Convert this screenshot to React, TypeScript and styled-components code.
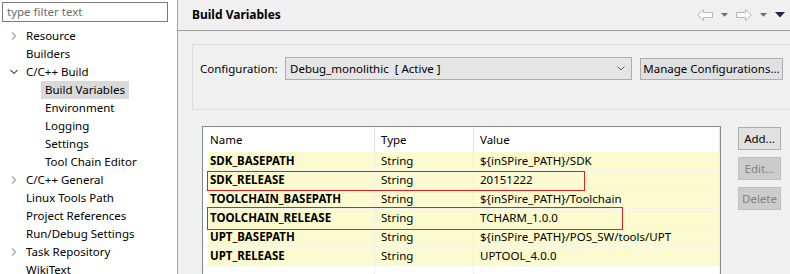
import React from 'react';
import styled, { createGlobalStyle } from 'styled-components';

const Global = createGlobalStyle`
  html, body { margin: 0; padding: 0; }
  body {
    font-family: "Noto Sans", "Liberation Sans", sans-serif;
    font-size: 11.5px;
    color: #000;
    background: #f0f0f0;
  }
  * { box-sizing: border-box; }
`;

const Window = styled.div`
  display: flex;
  width: 790px;
  height: 274px;
  overflow: hidden;
`;

const LeftPane = styled.div`
  width: 178px;
  flex: none;
  background: #fff;
  border-right: 1px solid #a0a0a0;
  display: flex;
  flex-direction: column;
`;

const Filter = styled.input`
  margin: 2px 0 0 2px;
  width: 166px;
  height: 20px;
  flex: none;
  border: 1px solid #7a7a7a;
  padding: 0 0 1px 4px;
  font: inherit;
  outline: none;
  &::placeholder { color: #6d6d6d; }
`;

const Tree = styled.div`
  padding-top: 5px;
  display: flex;
  flex-direction: column;
`;

const TreeRow = styled.div<{ $level: number }>`
  height: 18px;
  flex: none;
  display: flex;
  align-items: center;
  padding-left: ${(p) => (p.$level === 1 ? 10 : 41)}px;
  white-space: nowrap;
`;

const Toggle = styled.span`
  width: 12px;
  height: 18px;
  display: flex;
  align-items: center;
  flex: none;
`;

const TreeLabel = styled.span<{ $selected?: boolean }>`
  height: 18px;
  line-height: 18px;
  padding: 0 4px;
  background: ${(p) => (p.$selected ? '#d9d9d9' : 'transparent')};
`;

const RightPane = styled.div`
  flex: 1;
  display: flex;
  flex-direction: column;
  overflow: hidden;
`;

const Header = styled.div`
  height: 31px;
  flex: none;
  border-bottom: 1px solid #a0a0a0;
  display: flex;
  align-items: center;
  justify-content: space-between;
  padding: 0 5px 1px 14px;
`;

const Title = styled.div`
  font-weight: bold;
  font-size: 12px;
`;

const Nav = styled.div`
  display: flex;
  align-items: center;
  gap: 8px;
`;

const Body = styled.div`
  padding: 13px 0 0 14px;
  display: flex;
  flex-direction: column;
`;

const Group = styled.div`
  width: 640px;
  height: 66px;
  flex: none;
  border: 1px solid #dcdcdc;
  display: flex;
  align-items: flex-start;
  padding: 12px 0 0 7px;
`;

const FieldLabel = styled.div`
  width: 85px;
  line-height: 23px;
  flex: none;
`;

const Combo = styled.div`
  width: 347px;
  height: 23px;
  flex: none;
  background: #e5e5e5;
  border: 1px solid #adadad;
  display: flex;
  align-items: center;
  justify-content: space-between;
  padding: 0 6px 1px 4px;
  white-space: pre;
`;

const Button = styled.div<{ $disabled?: boolean; $width?: number }>`
  height: 23px;
  width: ${(p) => (p.$width ? `${p.$width}px` : 'auto')};
  flex: none;
  display: flex;
  align-items: center;
  justify-content: center;
  padding-bottom: 1px;
  background: ${(p) => (p.$disabled ? '#cccccc' : '#e1e1e1')};
  border: 1px solid ${(p) => (p.$disabled ? '#bfbfbf' : '#adadad')};
  color: ${(p) => (p.$disabled ? '#838383' : '#000')};
  white-space: nowrap;
`;

const ManageButton = styled(Button)`
  height: 22px;
  margin: 1px 0 0 8px;
`;

const TableArea = styled.div`
  display: flex;
  align-items: flex-start;
  margin: 16px 0 0 10px;
`;

const Table = styled.div`
  position: relative;
  width: 519px;
  height: 200px;
  flex: none;
  border: 1px solid #828790;
  background: #fff;
  display: flex;
  flex-direction: column;
`;

const Row = styled.div<{ $kind: 'head' | 'data' | 'fill' }>`
  display: grid;
  grid-template-columns: 172px 99px 1fr;
  height: ${(p) => (p.$kind === 'head' ? '25px' : p.$kind === 'data' ? '19px' : 'auto')};
  flex: ${(p) => (p.$kind === 'fill' ? 1 : 'none')};
`;

const Cell = styled.div<{ $kind: 'head' | 'data' | 'fill'; $first?: boolean }>`
  display: flex;
  align-items: center;
  white-space: nowrap;
  overflow: hidden;
  border-right: 1px solid ${(p) => (p.$kind === 'head' ? '#e5e5e5' : '#f0f0f0')};
  padding-left: 6px;
  padding-bottom: 1px;
  font-weight: ${(p) => (p.$kind === 'data' && p.$first ? 'bold' : 'normal')};
  background: ${(p) =>
    p.$kind === 'data'
      ? p.$first
        ? 'linear-gradient(to right, #fff 5px, #fbfbcf 5px)'
        : '#fbfbcf'
      : 'transparent'};
  border-bottom: ${(p) => (p.$kind === 'data' ? '1px solid #f2f2f2' : 'none')};
  ${(p) => (p.$first ? 'padding-left: 7px;' : '')}
`;

const Highlight = styled.div<{ $top: number; $width: number; $height: number }>`
  position: absolute;
  left: 4px;
  top: ${(p) => p.$top}px;
  width: ${(p) => p.$width}px;
  height: ${(p) => p.$height}px;
  border: 1px solid #e0202a;
  pointer-events: none;
`;

const SideButtons = styled.div`
  display: flex;
  flex-direction: column;
  gap: 7px;
  margin: 1px 0 0 17px;
`;

const Chevron = ({ open }: { open?: boolean }) =>
  open ? (
    <svg width="8" height="8" viewBox="0 0 8 8">
      <polyline points="0.5,2 4,5.5 7.5,2" fill="none" stroke="#5a5a5a" strokeWidth="1.2" />
    </svg>
  ) : (
    <svg width="8" height="8" viewBox="0 0 8 8">
      <polyline points="2,0.5 5.5,4 2,7.5" fill="none" stroke="#a6a6a6" strokeWidth="1.2" />
    </svg>
  );

const ArrowIcon = ({ dir }: { dir: 'left' | 'right' }) => (
  <svg width="16" height="12" viewBox="0 0 16 12" style={{ transform: dir === 'right' ? 'scaleX(-1)' : undefined }}>
    <polygon
      points="0.5,6 6.5,0.5 6.5,3.5 15.5,3.5 15.5,8.5 6.5,8.5 6.5,11.5"
      fill="#fafafa"
      stroke="#b8b8b8"
      strokeWidth="1"
    />
  </svg>
);

const Tri = ({ dark }: { dark?: boolean }) =>
  dark ? (
    <svg width="10" height="6" viewBox="0 0 10 6">
      <polygon points="0,0 10,0 5,5.5" fill="#2e2148" />
    </svg>
  ) : (
    <svg width="7" height="4" viewBox="0 0 7 4">
      <polygon points="0,0 7,0 3.5,3.8" fill="#6e6e6e" />
    </svg>
  );

type TreeItem = { label: string; level: number; toggle?: 'open' | 'closed'; selected?: boolean };

const treeItems: TreeItem[] = [
  { label: 'Resource', level: 1, toggle: 'closed' },
  { label: 'Builders', level: 1 },
  { label: 'C/C++ Build', level: 1, toggle: 'open' },
  { label: 'Build Variables', level: 2, selected: true },
  { label: 'Environment', level: 2 },
  { label: 'Logging', level: 2 },
  { label: 'Settings', level: 2 },
  { label: 'Tool Chain Editor', level: 2 },
  { label: 'C/C++ General', level: 1, toggle: 'closed' },
  { label: 'Linux Tools Path', level: 1 },
  { label: 'Project References', level: 1 },
  { label: 'Run/Debug Settings', level: 1 },
  { label: 'Task Repository', level: 1, toggle: 'closed' },
  { label: 'WikiText', level: 1 },
];

const variables = [
  ['SDK_BASEPATH', 'String', '${inSPire_PATH}/SDK'],
  ['SDK_RELEASE', 'String', '20151222'],
  ['TOOLCHAIN_BASEPATH', 'String', '${inSPire_PATH}/Toolchain'],
  ['TOOLCHAIN_RELEASE', 'String', 'TCHARM_1.0.0'],
  ['UPT_BASEPATH', 'String', '${inSPire_PATH}/POS_SW/tools/UPT'],
  ['UPT_RELEASE', 'String', 'UPTOOL_4.0.0'],
];

export default function App() {
  return (
    <>
      <Global />
      <Window>
        <LeftPane>
          <Filter placeholder="type filter text" />
          <Tree>
            {treeItems.map((t) => (
              <TreeRow key={t.label} $level={t.level}>
                {t.level === 1 && (
                  <Toggle>{t.toggle ? <Chevron open={t.toggle === 'open'} /> : null}</Toggle>
                )}
                <TreeLabel $selected={t.selected}>{t.label}</TreeLabel>
              </TreeRow>
            ))}
          </Tree>
        </LeftPane>
        <RightPane>
          <Header>
            <Title>Build Variables</Title>
            <Nav>
              <ArrowIcon dir="left" />
              <Tri />
              <ArrowIcon dir="right" />
              <Tri />
              <Tri dark />
            </Nav>
          </Header>
          <Body>
            <Group>
              <FieldLabel>Configuration:</FieldLabel>
              <Combo>
                <span>Debug_monolithic  [ Active ]</span>
                <svg width="8" height="5" viewBox="0 0 8 5">
                  <polyline points="0.5,0.5 4,4 7.5,0.5" fill="none" stroke="#606060" strokeWidth="1" />
                </svg>
              </Combo>
              <ManageButton $width={143}>Manage Configurations...</ManageButton>
            </Group>
            <TableArea>
              <Table>
                <Row $kind="head">
                  <Cell $kind="head" $first>Name</Cell>
                  <Cell $kind="head">Type</Cell>
                  <Cell $kind="head">Value</Cell>
                </Row>
                {variables.map((v) => (
                  <Row $kind="data" key={v[0]}>
                    <Cell $kind="data" $first>{v[0]}</Cell>
                    <Cell $kind="data">{v[1]}</Cell>
                    <Cell $kind="data">{v[2]}</Cell>
                  </Row>
                ))}
                <Row $kind="fill">
                  <Cell $kind="fill" $first />
                  <Cell $kind="fill" />
                  <Cell $kind="fill" />
                </Row>
                <Highlight $top={44} $width={378} $height={20} />
                <Highlight $top={80} $width={416} $height={23} />
              </Table>
              <SideButtons>
                <Button $width={43}>Add...</Button>
                <Button $width={43} $disabled>Edit...</Button>
                <Button $width={43} $disabled>Delete</Button>
              </SideButtons>
            </TableArea>
          </Body>
        </RightPane>
      </Window>
    </>
  );
}
